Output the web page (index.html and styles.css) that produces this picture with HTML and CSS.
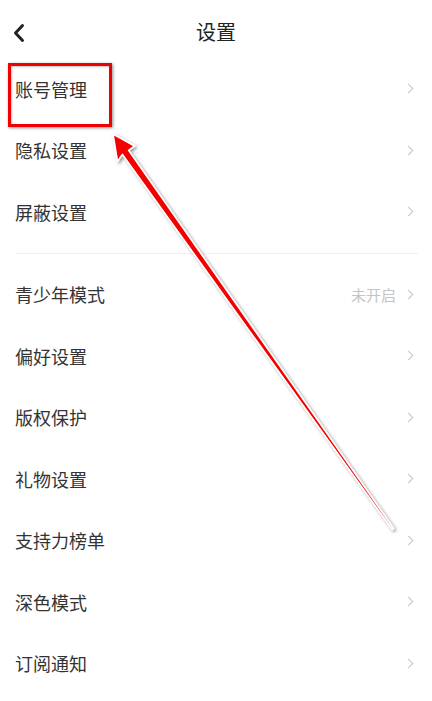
FILE: index.html
```html
<!DOCTYPE html>
<html lang="zh">
<head>
<meta charset="utf-8">
<link rel="stylesheet" href="styles.css">
</head>
<body>
<div class="page">
  <header class="topbar">
    <svg class="back" width="12" height="20" viewBox="0 0 12 20"><path d="M9.5 2.5 L2.5 10 L9.5 17.5" fill="none" stroke="#222" stroke-width="3" stroke-linecap="round" stroke-linejoin="round"/></svg>
    <div class="title">设置</div>
  </header>
  <ul class="list">
    <li class="row"><span class="label">账号管理</span><span class="chev"></span></li>
    <li class="row"><span class="label">隐私设置</span><span class="chev"></span></li>
    <li class="row"><span class="label">屏蔽设置</span><span class="chev"></span></li>
  </ul>
  <div class="divider"></div>
  <ul class="list">
    <li class="row"><span class="label">青少年模式</span><span class="value">未开启</span><span class="chev"></span></li>
    <li class="row"><span class="label">偏好设置</span><span class="chev"></span></li>
    <li class="row"><span class="label">版权保护</span><span class="chev"></span></li>
    <li class="row"><span class="label">礼物设置</span><span class="chev"></span></li>
    <li class="row"><span class="label">支持力榜单</span><span class="chev"></span></li>
    <li class="row"><span class="label">深色模式</span><span class="chev"></span></li>
    <li class="row"><span class="label">订阅通知</span><span class="chev"></span></li>
  </ul>
  <div class="highlight"></div>
  <svg class="arrow" width="432" height="701" viewBox="0 0 432 701">
    <defs>
      <filter id="sh" x="-20%" y="-20%" width="140%" height="140%">
        <feDropShadow dx="1.5" dy="1.5" stdDeviation="1.5" flood-color="#000" flood-opacity="0.45"/>
      </filter>
    </defs>
    <polygon points="113,134 134.5,146 128.6,150.4 393.7,528.5 392.3,529.5 122.4,154.4 117.5,161.5" fill="#f50000" stroke="#fff" stroke-width="1.6" stroke-linejoin="round" filter="url(#sh)"/>
  </svg>
</div>
</body>
</html>
```

FILE: styles.css
```css
* { box-sizing: border-box; }
html, body { margin: 0; padding: 0; background: #fff; }
body {
  font-family: "Noto Sans CJK SC", "Noto Sans", sans-serif;
  color: #333;
}
.page {
  position: relative;
  width: 432px;
  height: 701px;
  overflow: hidden;
  background: #fff;
}
.topbar {
  height: 58px;
  display: flex;
  align-items: center;
  justify-content: center;
  position: relative;
  padding-top: 6px;
}
.back {
  position: absolute;
  left: 13px;
  top: 23px;
}
.title {
  font-size: 20px;
  color: #222;
  line-height: 1;
}
.list {
  list-style: none;
  margin: 0;
  padding: 0;
}
.row {
  height: 61.5px;
  display: flex;
  align-items: center;
  padding: 0 18px 0 15px;
}
.label {
  font-size: 18px;
  color: #333;
  flex: 1;
  line-height: 1;
}
.value {
  font-size: 15px;
  color: #c4c4c4;
  margin-right: 9px;
  line-height: 1;
}
.chev {
  width: 7px;
  height: 7px;
  border-top: 1.5px solid #c6c6c6;
  border-right: 1.5px solid #c6c6c6;
  transform: rotate(45deg);
  margin-right: 2px;
}
.divider {
  height: 1px;
  background: #f0f0f0;
  margin: 10px 14px 10px 15px;
}
.highlight {
  position: absolute;
  left: 8px;
  top: 63px;
  width: 104px;
  height: 64px;
  border: 3px solid #f00000;
  box-shadow: 1px 1px 3px rgba(0,0,0,0.45), inset 1px 1px 2px rgba(0,0,0,0.25);
}
.arrow {
  position: absolute;
  left: 0;
  top: 0;
}
```
